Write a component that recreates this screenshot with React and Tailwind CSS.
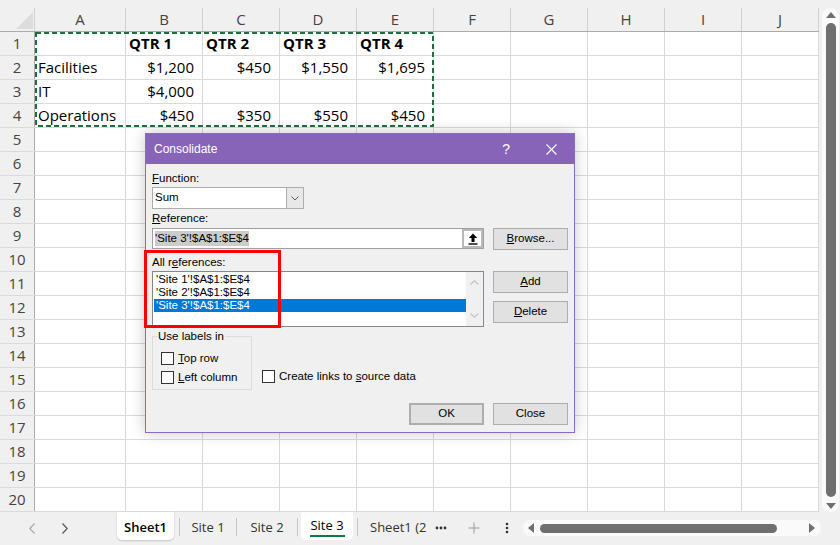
import React from "react";

const COLS = ["A", "B", "C", "D", "E", "F", "G", "H", "I", "J"];

const DATA = [
  ["", "QTR 1", "QTR 2", "QTR 3", "QTR 4"],
  ["Facilities", "$1,200", "$450", "$1,550", "$1,695"],
  ["IT", "$4,000", "", "", ""],
  ["Operations", "$450", "$350", "$550", "$450"],
];

function colWidth(i) {
  return i === 0 ? "w-[91px]" : "w-[77px]";
}

function GridRow({ n }) {
  const vals = DATA[n - 1] || [];
  return (
    <div className="flex h-[24px] border-b border-[#dadada]">
      <div className="w-[35px] shrink-0 bg-[#f0f0f0] border-r border-[#ababab] flex items-center justify-center text-[#444]">
        {n}
      </div>
      {COLS.map((c, i) => {
        const v = vals[i] || "";
        const header = n === 1;
        const right = !header && i > 0;
        return (
          <div
            key={c}
            className={`${colWidth(i)} shrink-0 h-full border-r border-[#dadada] flex items-center whitespace-nowrap ${
              right ? "justify-end pr-[8px]" : "pl-[3px]"
            } ${header ? "font-bold" : ""}`}
          >
            {v}
          </div>
        );
      })}
    </div>
  );
}

function Check() {
  return <div className="w-[13px] h-[13px] shrink-0 border border-[#333] bg-white" />;
}

function Btn({ children, className = "" }) {
  return (
    <div
      className={`w-[75px] h-[22px] bg-[#e1e1e1] border border-[#adadad] flex items-center justify-center ${className}`}
    >
      {children}
    </div>
  );
}

function Tri({ dir, className = "" }) {
  const pts = {
    up: "0,6 5,0 10,6",
    down: "0,0 10,0 5,6",
    left: "6,0 6,10 0,5",
    right: "0,0 0,10 6,5",
  }[dir];
  const w = dir === "up" || dir === "down" ? 10 : 6;
  const h = dir === "up" || dir === "down" ? 6 : 10;
  return (
    <svg width={w} height={h} viewBox={`0 0 ${w} ${h}`} className={className}>
      <polygon points={pts} fill="#6f6f6f" />
    </svg>
  );
}

function Sep() {
  return <div className="w-px h-[18px] mt-[6px] bg-[#c6c6c6] shrink-0" />;
}

export default function App() {
  return (
    <div className="relative w-[840px] h-[545px] overflow-hidden bg-white font-['Open_Sans',sans-serif] text-[15px] text-black">
      <div className="flex h-[512px]">
        <div className="w-[819px] flex flex-col">
          {/* column header */}
          <div className="flex h-[32px] pt-[8px] bg-[#f0f0f0] border-b border-[#ababab]">
            <div className="w-[35px] shrink-0 border-r border-[#d0d0d0] flex items-end justify-end pr-[1px] pb-[2px]">
              <svg width="17" height="17" viewBox="0 0 17 17">
                <polygon points="17,0 17,17 0,17" fill="#dcdcdc" />
              </svg>
            </div>
            {COLS.map((c, i) => (
              <div
                key={c}
                className={`${colWidth(i)} shrink-0 border-r border-[#d0d0d0] flex items-center justify-center text-[#444]`}
              >
                {c}
              </div>
            ))}
          </div>
          {Array.from({ length: 20 }, (_, i) => (
            <GridRow key={i} n={i + 1} />
          ))}
        </div>

        {/* vertical scrollbar */}
        <div className="w-[21px] bg-[#f0f0f0]">
          <div className="mt-[8px] ml-[3px] w-[17px] h-[504px] rounded-full bg-[#fafafa] flex flex-col items-center">
            <Tri dir="up" className="mt-[4px]" />
            <div className="mt-[5px] w-[10px] h-[474px] rounded-full bg-[#6f6f6f]" />
            <Tri dir="down" className="mt-[6px]" />
          </div>
        </div>
      </div>

      {/* sheet tabs */}
      <div className="h-[33px] bg-[#f0f0f0] flex items-start text-[13px] text-[#333]">
        <div className="w-[117px] h-[32px] flex items-center shrink-0">
          <svg width="6" height="11" viewBox="0 0 6 11" className="ml-[29px]">
            <path d="M5.5 0.5 L0.8 5.5 L5.5 10.5" fill="none" stroke="#a8a8a8" strokeWidth="1.2" />
          </svg>
          <svg width="6" height="11" viewBox="0 0 6 11" className="ml-[27px]">
            <path d="M0.5 0.5 L5.2 5.5 L0.5 10.5" fill="none" stroke="#555" strokeWidth="1.2" />
          </svg>
        </div>
        <div className="w-[57px] h-[28px] pt-[4px] shrink-0 bg-white rounded-b-[5px] shadow-[0_1px_2px_rgba(0,0,0,0.18)] flex items-center justify-center font-semibold text-black">
          Sheet1
        </div>
        <div className="w-[5px] shrink-0" />
        <Sep />
        <div className="w-[56px] h-[32px] shrink-0 flex items-center justify-center">Site 1</div>
        <Sep />
        <div className="w-[60px] h-[32px] shrink-0 flex items-center justify-center">Site 2</div>
        <Sep />
        <div className="ml-[3px] w-[52px] h-[28px] pt-[4px] shrink-0 bg-white rounded-b-[5px] flex flex-col items-center text-black">
          <span className="leading-[18px]">Site 3</span>
          <div className="mt-[1px] w-[35px] h-[2px] bg-[#107c41]" />
        </div>
        <div className="w-[4px] shrink-0" />
        <Sep />
        <div className="w-[70px] h-[32px] pl-[12px] shrink-0 flex items-center whitespace-nowrap overflow-hidden">
          Sheet1 (2
        </div>
        <div className="w-[26px] h-[32px] shrink-0 flex items-center justify-center">
          <svg width="12" height="4" viewBox="0 0 12 4">
            <circle cx="2" cy="2" r="1.4" fill="#333" />
            <circle cx="6" cy="2" r="1.4" fill="#333" />
            <circle cx="10" cy="2" r="1.4" fill="#333" />
          </svg>
        </div>
        <div className="w-[40px] h-[32px] shrink-0 flex items-center justify-center">
          <svg width="12" height="12" viewBox="0 0 12 12">
            <path d="M6 0.5 V11.5 M0.5 6 H11.5" stroke="#9a9a9a" strokeWidth="1" />
          </svg>
        </div>
        <div className="w-[26px] h-[32px] shrink-0 flex items-center justify-center">
          <svg width="4" height="12" viewBox="0 0 4 12">
            <circle cx="2" cy="2" r="1.3" fill="#333" />
            <circle cx="2" cy="6" r="1.3" fill="#333" />
            <circle cx="2" cy="10" r="1.3" fill="#333" />
          </svg>
        </div>
        <div className="ml-[3px] mt-[8px] w-[298px] h-[16px] shrink-0 rounded-full bg-[#fafafa] flex items-center">
          <Tri dir="left" className="ml-[5px]" />
          <div className="ml-[6px] w-[237px] h-[9px] rounded-full bg-[#6f6f6f]" />
          <Tri dir="right" className="ml-auto mr-[6px]" />
        </div>
      </div>

      {/* copy marquee */}
      <svg
        width="399"
        height="95"
        viewBox="0 0 399 95"
        className="absolute left-[35px] top-[32px] pointer-events-none"
      >
        <rect x="1" y="1" width="397" height="93" fill="none" stroke="#1f6e40" strokeWidth="2" strokeDasharray="5 3" />
      </svg>

      {/* Consolidate dialog */}
      <div className="absolute left-[145px] top-[133px] w-[430px] h-[300px] bg-[#f0f0f0] border border-[#8a6bbd] shadow-[0_0_14px_rgba(0,0,0,0.22)] font-['Liberation_Sans',sans-serif] text-[11.5px] text-black">
        <div className="h-[30px] bg-[#8764b8] flex items-center text-white">
          <span className="pl-[8px] text-[12px] flex-1">Consolidate</span>
          <span className="text-[14px] mr-[36px]">?</span>
          <svg width="11" height="11" viewBox="0 0 11 11" className="mr-[17px]">
            <path d="M0.5 0.5 L10.5 10.5 M10.5 0.5 L0.5 10.5" stroke="#fff" strokeWidth="1.1" />
          </svg>
        </div>

        <div className="px-[6px] pt-[7px] flex flex-col">
          <div className="h-[14px] leading-[14px]">
            <span className="underline">F</span>unction:
          </div>
          <div className="mt-[2px] w-[152px] h-[22px] border border-[#adadad] bg-white flex">
            <div className="flex-1 pl-[2px] flex items-center">Sum</div>
            <div className="w-[17px] border-l border-[#adadad] bg-[#e8e8e8] flex items-center justify-center">
              <svg width="8" height="5" viewBox="0 0 8 5">
                <path d="M0.5 0.5 L4 4 L7.5 0.5" fill="none" stroke="#606060" strokeWidth="1" />
              </svg>
            </div>
          </div>

          <div className="mt-[2px] h-[14px] leading-[14px]">
            <span className="underline">R</span>eference:
          </div>
          <div className="mt-[3px] flex gap-[9px]">
            <div className="w-[332px] h-[21px] border border-[#a0a0a0] bg-white flex">
              <div className="flex-1 pl-[2px] flex items-center">
                <span className="bg-[#cccccc] leading-[15px]">'Site 3'!$A$1:$E$4</span>
              </div>
              <div className="w-[21px] h-full border-2 border-[#b9b9b9] bg-white flex items-center justify-center">
                <svg width="10" height="12" viewBox="0 0 10 12">
                  <path d="M5 0.5 L0.8 5 H3.5 V9 H6.5 V5 H9.2 Z" fill="#000" />
                  <rect x="0.5" y="10.3" width="9" height="1.4" fill="#000" />
                </svg>
              </div>
            </div>
            <Btn>
              <span>
                <span className="underline">B</span>rowse...
              </span>
            </Btn>
          </div>

          <div className="mt-[5px] h-[14px] leading-[14px]">
            All r<span className="underline">e</span>ferences:
          </div>
          <div className="mt-[2px] flex gap-[9px]">
            <div className="w-[332px] h-[56px] border border-[#828790] bg-white flex">
              <div className="flex-1 pt-[1px] pl-[1px] flex flex-col">
                <div className="h-[13px] leading-[13px] pl-[2px]">'Site 1'!$A$1:$E$4</div>
                <div className="h-[13px] leading-[13px] pl-[2px]">'Site 2'!$A$1:$E$4</div>
                <div className="h-[13px] leading-[13px] pl-[2px] bg-[#0078d7] text-white">'Site 3'!$A$1:$E$4</div>
              </div>
              <div className="w-[17px] bg-[#f0f0f0] flex flex-col items-center justify-between py-[8px]">
                <svg width="9" height="5" viewBox="0 0 9 5">
                  <path d="M0.5 4.5 L4.5 0.8 L8.5 4.5" fill="none" stroke="#c2c2c2" strokeWidth="1.2" />
                </svg>
                <svg width="9" height="5" viewBox="0 0 9 5">
                  <path d="M0.5 0.5 L4.5 4.2 L8.5 0.5" fill="none" stroke="#c2c2c2" strokeWidth="1.2" />
                </svg>
              </div>
            </div>
            <div className="flex flex-col gap-[8px]">
              <Btn>
                <span>
                  <span className="underline">A</span>dd
                </span>
              </Btn>
              <Btn>
                <span>
                  <span className="underline">D</span>elete
                </span>
              </Btn>
            </div>
          </div>

          <div className="mt-[9px] flex items-start">
            <div className="relative w-[100px] h-[54px] border border-[#dcdcdc] pt-[15px] pl-[8px] flex flex-col gap-[6px]">
              <span className="absolute left-[4px] top-[-8px] px-[1px] bg-[#f0f0f0] leading-[14px]">Use labels in</span>
              <div className="flex items-center gap-[4px] h-[13px]">
                <Check />
                <span>
                  <span className="underline">T</span>op row
                </span>
              </div>
              <div className="flex items-center gap-[4px] h-[13px]">
                <Check />
                <span>
                  <span className="underline">L</span>eft column
                </span>
              </div>
            </div>
            <div className="ml-[10px] mt-[34px] flex items-center gap-[4px] h-[13px]">
              <Check />
              <span>
                Create links to <span className="underline">s</span>ource data
              </span>
            </div>
          </div>

          <div className="mt-[13px] flex justify-end gap-[9px]">
            <Btn className="border-2 border-[#0078d7]">OK</Btn>
            <Btn>Close</Btn>
          </div>
        </div>
      </div>

      {/* red annotation */}
      <div className="absolute left-[144px] top-[250px] w-[137px] h-[78px] border-[3px] border-[#ff0000] pointer-events-none" />
    </div>
  );
}
